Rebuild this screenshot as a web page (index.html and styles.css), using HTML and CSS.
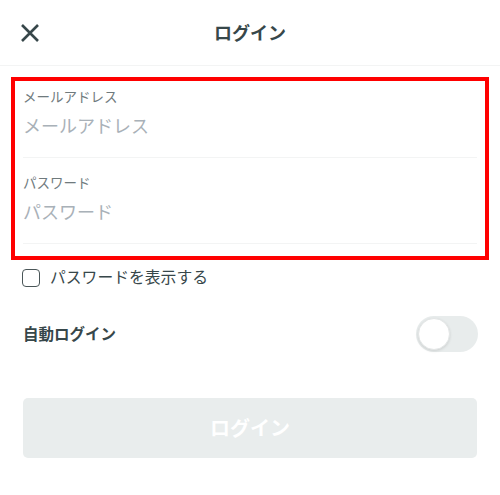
FILE: index.html
```html
<!DOCTYPE html>
<html lang="ja">
<head>
  <meta charset="UTF-8">
  <meta name="viewport" content="width=device-width, initial-scale=1.0">
  <title>ログイン</title>
  <link rel="stylesheet" href="styles.css">
</head>
<body>
<header class="top-bar">
  <button class="close-btn" aria-label="閉じる">
    <svg width="20" height="20" viewBox="0 0 20 20">
      <path d="M2 2 L18 18 M18 2 L2 18" stroke="#37474a" stroke-width="2.6" fill="none"/>
    </svg>
  </button>
  <h1 class="title">ログイン</h1>
  <span></span>
</header>

<main class="login">
  <div class="field-box">
    <div class="field">
      <label for="email">メールアドレス</label>
      <input type="email" id="email" placeholder="メールアドレス">
    </div>
    <div class="field">
      <label for="password">パスワード</label>
      <input type="password" id="password" placeholder="パスワード">
    </div>
  </div>

  <label class="check-row">
    <span class="check-box"></span>
    <span class="check-text">パスワードを表示する</span>
  </label>

  <div class="auto-row">
    <span class="auto-label">自動ログイン</span>
    <span class="toggle"><span class="knob"></span></span>
  </div>

  <button class="login-btn" disabled>ログイン</button>
</main>
</body>
</html>
```

FILE: styles.css
```css
* {
  margin: 0;
  padding: 0;
  box-sizing: border-box;
}

body {
  font-family: 'Noto Sans CJK JP', 'Noto Sans', sans-serif;
  background: #fff;
  color: #37474a;
  width: 500px;
}

.top-bar {
  height: 66px;
  display: grid;
  grid-template-columns: 1fr auto 1fr;
  align-items: center;
  border-bottom: 1px solid #f3f4f4;
}

.close-btn {
  justify-self: start;
  margin-left: 20px;
  margin-top: 1px;
  width: 20px;
  height: 20px;
  border: none;
  background: none;
  display: flex;
}

.title {
  font-size: 18px;
  font-weight: 700;
  line-height: 24px;
  padding-bottom: 2px;
  color: #37474a;
}

.login {
  padding: 11px 11px 0;
}

.field-box {
  border: 4px solid #ff0000;
  padding: 0 8px 12px;
}

.field {
  padding: 16px 0 16px;
  border-bottom: 1px solid #f3f4f4;
  display: flex;
  flex-direction: column;
  gap: 4px;
}

.field:first-child {
  padding-top: 7px;
}

.field label {
  font-size: 13.5px;
  line-height: 17px;
  color: #6f7a7d;
}

.field input {
  height: 32px;
  border: none;
  outline: none;
  font-family: inherit;
  font-size: 18px;
  color: #37474a;
  background: transparent;
}

.field input::placeholder {
  color: #a9b1b8;
}

.check-row {
  display: flex;
  align-items: center;
  gap: 10px;
  margin: 7px 0 0 11px;
  height: 22px;
  font-size: 15.8px;
  color: #37474a;
}

.check-box {
  width: 18px;
  height: 18px;
  border: 1.5px solid #4a5658;
  border-radius: 4px;
}

.check-text {
  padding-bottom: 3px;
}

.auto-row {
  display: flex;
  align-items: center;
  justify-content: space-between;
  margin: 27px 11px 0 12px;
  height: 36px;
}

.auto-label {
  font-size: 15.5px;
  font-weight: 700;
  padding-bottom: 3px;
  color: #37474a;
}

.toggle {
  width: 62px;
  height: 36px;
  border-radius: 18px;
  background: #e8ecec;
  padding: 2px;
  display: flex;
}

.knob {
  width: 32px;
  height: 32px;
  border-radius: 50%;
  background: #fff;
  border: 1px solid #e3e6e6;
  box-shadow: 0 1px 3px rgba(0, 0, 0, 0.12);
}

.login-btn {
  display: block;
  width: 454px;
  height: 60px;
  margin: 46px 0 0 12px;
  border: none;
  border-radius: 5px;
  background: #e9eded;
  color: #fff;
  font-family: inherit;
  font-size: 20px;
  font-weight: 700;
  padding-bottom: 2px;
}
```
